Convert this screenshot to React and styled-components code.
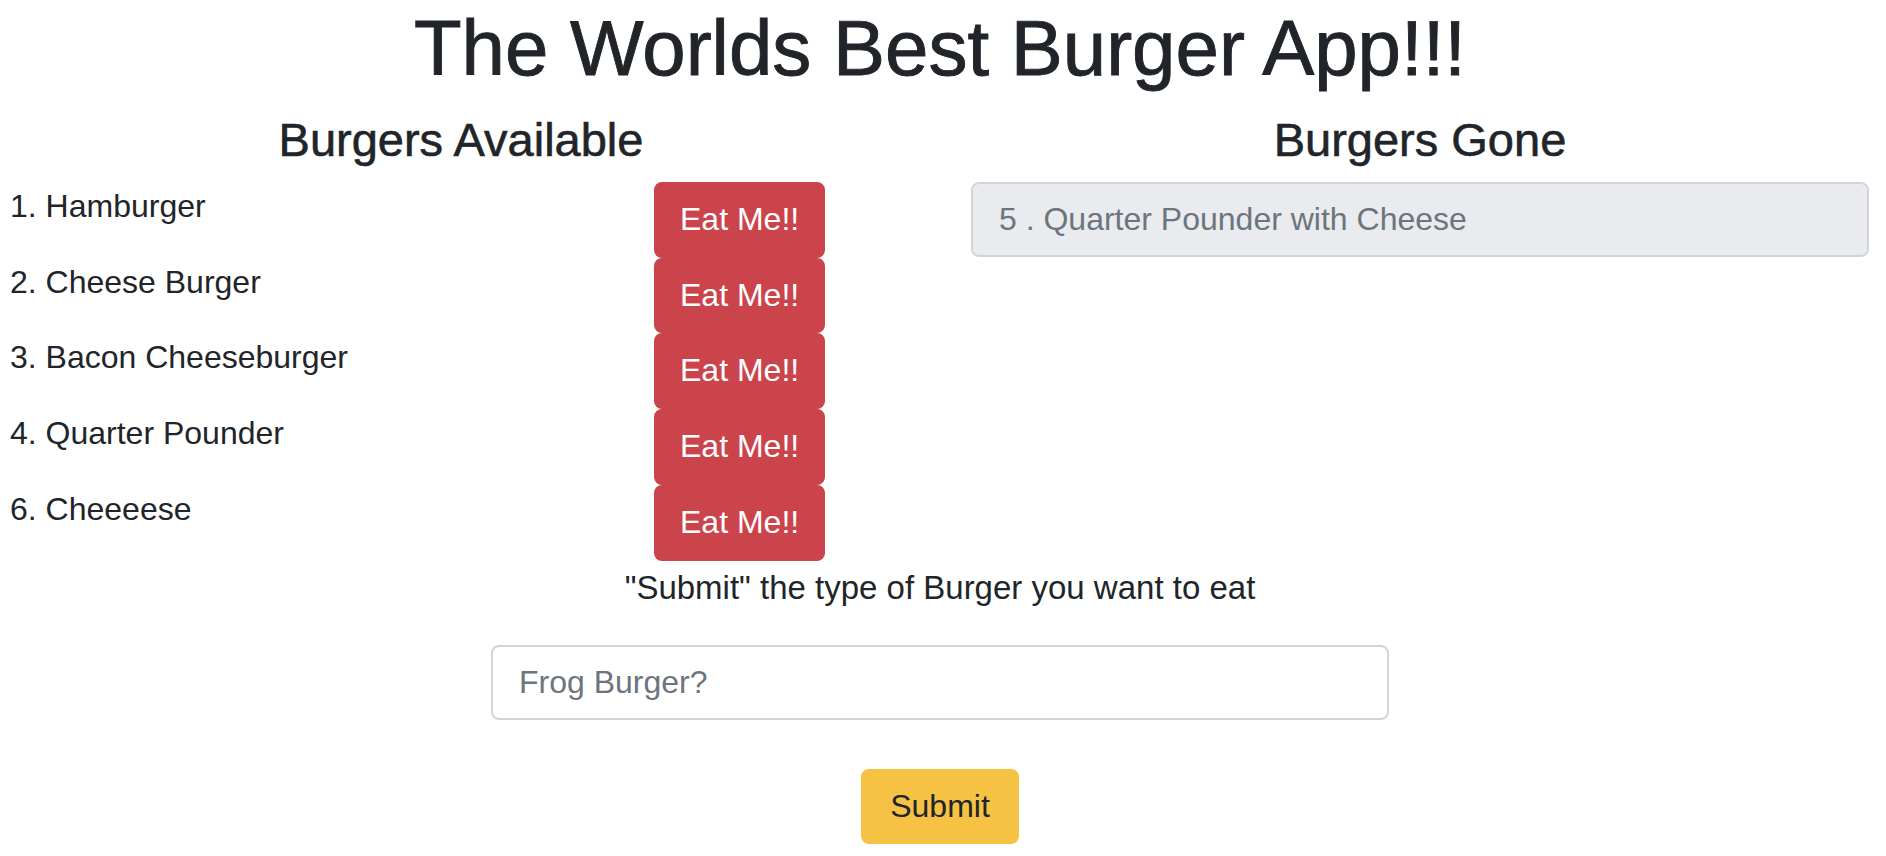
import React from "react";
import styled, { createGlobalStyle } from "styled-components";

const GlobalStyle = createGlobalStyle`
  body {
    margin: 0;
    background: #ffffff;
    color: #212529;
    font-family: "Liberation Sans", Arial, sans-serif;
    font-size: 32px;
    line-height: 48px;
  }
  * {
    box-sizing: border-box;
  }
`;

const Page = styled.div`
  width: 1880px;
  padding-top: 2px;
`;

const Title = styled.h1`
  margin: 0 0 16px;
  font-size: 78px;
  font-weight: 500;
  line-height: 1.2;
  text-align: center;
  -webkit-text-stroke: 0.9px #212529;
`;

const Columns = styled.div`
  display: grid;
  grid-template-columns: 922px 1fr;
`;

const Column = styled.section`
  padding: ${(p) => (p.$right ? "0 11px 0 49px" : "0")};
`;

const Heading = styled.h4`
  margin: 0 0 14px;
  font-size: 47px;
  font-weight: 500;
  line-height: 1.2;
  text-align: center;
  -webkit-text-stroke: 0.6px #212529;
`;

const List = styled.div`
  display: flex;
  flex-direction: column;
`;

const Row = styled.div`
  display: grid;
  grid-template-columns: 644px auto;
  align-items: start;
  padding-left: 10px;
`;

const ItemName = styled.span`
  line-height: 48px;
`;

const Button = styled.button`
  justify-self: start;
  font-family: inherit;
  font-size: 32px;
  line-height: 47.75px;
  padding: 12px ${(p) => p.$padX || 24}px;
  border: 2px solid ${(p) => p.$bg};
  border-radius: 8px;
  background: ${(p) => p.$bg};
  color: ${(p) => p.$color};
  cursor: pointer;
`;

const Field = styled.input`
  display: block;
  width: 100%;
  height: 75px;
  padding: 0 26px;
  font-family: inherit;
  font-size: 32px;
  color: #495057;
  background: ${(p) => (p.disabled ? "#e9ebee" : "#ffffff")};
  border: 2px solid #d1d5da;
  border-radius: 8px;
  outline: none;

  &::placeholder {
    color: #6c757d;
    opacity: 1;
  }
`;

const FormArea = styled.form`
  display: flex;
  flex-direction: column;
  align-items: center;
`;

const Prompt = styled.p`
  margin: 3px 0 33px;
  font-size: 33px;
  line-height: 48px;
`;

const FieldWrap = styled.div`
  width: 898px;
  margin-bottom: 49px;
`;

const burgers = [
  { id: 1, name: "Hamburger" },
  { id: 2, name: "Cheese Burger" },
  { id: 3, name: "Bacon Cheeseburger" },
  { id: 4, name: "Quarter Pounder" },
  { id: 6, name: "Cheeeese" },
];

const eaten = [{ id: 5, name: "Quarter Pounder with Cheese" }];

export default function App() {
  return (
    <Page>
      <GlobalStyle />
      <Title>The Worlds Best Burger App!!!</Title>
      <Columns>
        <Column>
          <Heading>Burgers Available</Heading>
          <List>
            {burgers.map((b) => (
              <Row key={b.id}>
                <ItemName>
                  {b.id}. {b.name}
                </ItemName>
                <Button type="button" $bg="#cc444b" $color="#ffffff">
                  Eat Me!!
                </Button>
              </Row>
            ))}
          </List>
        </Column>
        <Column $right>
          <Heading>Burgers Gone</Heading>
          {eaten.map((b) => (
            <Field key={b.id} disabled placeholder={`${b.id} . ${b.name}`} />
          ))}
        </Column>
      </Columns>
      <FormArea onSubmit={(e) => e.preventDefault()}>
        <Prompt>"Submit" the type of Burger you want to eat</Prompt>
        <FieldWrap>
          <Field placeholder="Frog Burger?" />
        </FieldWrap>
        <Button type="submit" $bg="#f6c244" $color="#212529" $padX={27}>
          Submit
        </Button>
      </FormArea>
    </Page>
  );
}
